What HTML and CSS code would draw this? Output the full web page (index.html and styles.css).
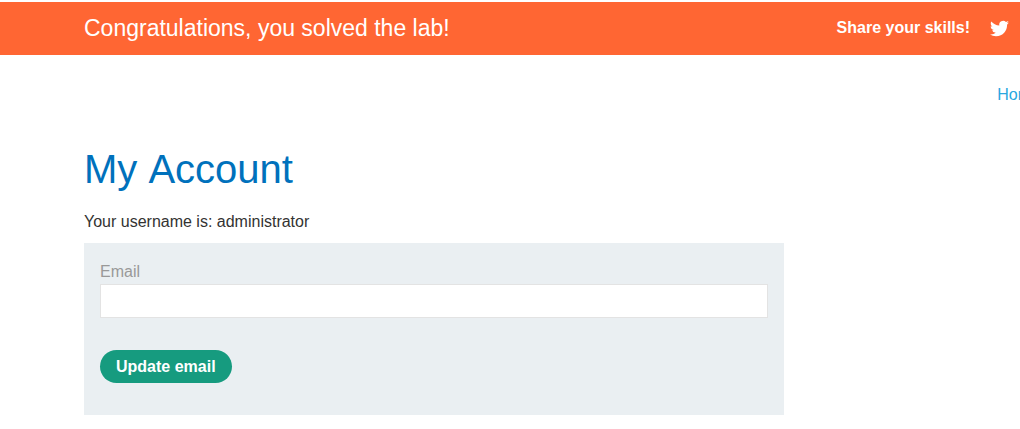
FILE: index.html
```html
<!DOCTYPE html>
<html lang="en">
<head>
<meta charset="utf-8">
<meta name="viewport" content="width=device-width, initial-scale=1">
<title>My Account</title>
<link rel="stylesheet" href="styles.css">
</head>
<body>
<section class="banner">
  <p class="banner-title">Congratulations, you solved the lab!</p>
  <div class="share">
    <span>Share your skills!</span>
    <a class="share-link" href="#" aria-label="Share on Twitter">
      <svg class="share-icon" viewBox="0 0 24 24" aria-hidden="true"><path fill="currentColor" d="M23.95 4.57a10 10 0 0 1-2.82.77 4.96 4.96 0 0 0 2.16-2.72c-.95.55-2 .95-3.13 1.18a4.92 4.92 0 0 0-8.38 4.48C7.69 8.1 4.07 6.13 1.64 3.16a4.82 4.82 0 0 0-.67 2.48c0 1.71.87 3.21 2.19 4.1a4.9 4.9 0 0 1-2.23-.62v.06a4.92 4.92 0 0 0 3.95 4.83 5 5 0 0 1-2.21.08 4.94 4.94 0 0 0 4.6 3.42A9.87 9.87 0 0 1 0 19.54a14 14 0 0 0 7.55 2.21c9.05 0 14-7.5 14-13.98 0-.21 0-.42-.02-.63a9.94 9.94 0 0 0 2.42-2.57z"/></svg>
    </a>
  </div>
</section>
<div class="page">
  <nav class="nav"><a class="nav-link" href="#">Home</a></nav>
  <main class="account">
    <h1 class="title">My Account</h1>
    <p class="username">Your username is: administrator</p>
    <form class="form">
      <label class="label" for="email">Email</label>
      <input class="input" id="email" name="email" type="email">
      <button class="button" type="submit">Update email</button>
    </form>
  </main>
</div>
</body>
</html>
```
FILE: styles.css
```css
* {
  box-sizing: border-box;
}

body {
  margin: 0;
  padding-top: 2px;
  overflow-x: hidden;
  background: #fff;
  color: #333332;
  font: 16px/24px "Liberation Sans", Arial, sans-serif;
}

p,
h1 {
  margin: 0;
}

.banner {
  display: flex;
  align-items: center;
  justify-content: space-between;
  padding: 12px 11px 13px 84px;
  background: #ff6633;
  color: #fff;
}

.banner-title {
  font-size: 23px;
  line-height: 28px;
}

.share {
  display: flex;
  align-items: center;
  gap: 20px;
  font-weight: 700;
}

.share-link {
  display: flex;
  color: inherit;
}

.share-icon {
  width: 19px;
  height: 19px;
}

.page {
  padding: 28px 0 14px 84px;
}

.nav {
  display: flex;
  justify-content: flex-end;
  margin-right: -20px;
}

.nav-link {
  color: #29a7df;
  text-decoration: none;
}

.account {
  max-width: 700px;
  padding-top: 39px;
}

.title {
  color: #0071bc;
  font-size: 40px;
  font-weight: 400;
  line-height: 46px;
  font-kerning: none;
}

.username {
  padding: 18px 0 9px;
}

.form {
  display: flex;
  flex-direction: column;
  align-items: flex-start;
  padding: 17px 16px 32px;
  background: #eaeff2;
}

.label {
  color: #999;
}

.input {
  width: 100%;
  height: 34px;
  margin: 0 0 32px;
  padding: 4px 8px;
  border: 1px solid #e3e3e3;
  background: #fff;
  font: inherit;
}

.button {
  height: 33px;
  padding: 0 16px;
  border: 0;
  border-radius: 17px;
  background: #169b7f;
  color: #fff;
  font: inherit;
  font-weight: 700;
}
```
